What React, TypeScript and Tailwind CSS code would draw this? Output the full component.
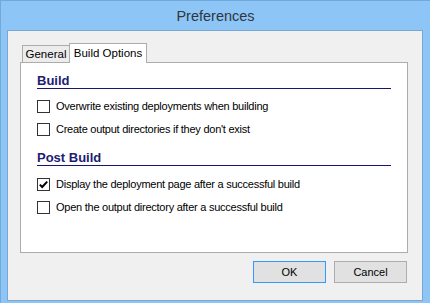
import React, { useState } from 'react';

const CheckRow = ({ label, checked }: { label: string; checked: boolean }) => (
  <label className="flex items-center h-[13px]">
    <span className="flex items-center justify-center w-[13px] h-[13px] border border-[#333333] bg-white shrink-0">
      {checked && (
        <svg width="11" height="11" viewBox="0 0 11 11">
          <path d="M1.8 5.6 L4.2 8 L9.2 2.6" fill="none" stroke="#000" strokeWidth="2" />
        </svg>
      )}
    </span>
    <span className="ml-[6px] text-[11px] leading-[13px] tracking-[-0.25px] text-black">{label}</span>
  </label>
);

const Heading = ({ children }: { children: React.ReactNode }) => (
  <div className="border-b border-[#16166e] text-[13px] leading-[14px] font-bold text-[#1c1c72]">
    {children}
  </div>
);

const App = () => {
  const [tab] = useState('build');

  return (
    <div
      className="w-[430px] h-[303px] bg-[#8dc6f6] border-l border-t border-[#72a9dc] overflow-hidden"
      style={{ fontFamily: '"Liberation Sans", Arial, sans-serif' }}
    >
      {/* title bar */}
      <div className="h-[29px] flex items-center justify-center pt-[3px] text-[14.5px] text-[#2f3640]">
        Preferences
      </div>

      {/* client area */}
      <div className="ml-[6px] w-[416px] h-[271px] border border-[#7aa6d2] bg-[#f0f0f0]">
        <div className="ml-[12px] w-[388px] pt-[12px]">
          {/* tabs */}
          <div className="flex items-end h-[19px] pl-[2px] text-[11.5px] text-black">
            <div className="h-[17px] w-[48px] border border-b-0 border-[#acacac] bg-[#ececec] flex items-center justify-center pt-[1px]">
              General
            </div>
            <div className="relative z-10 -mb-px h-[20px] w-[78px] -ml-px border border-b-0 border-[#acacac] bg-white flex items-center justify-center">
              {tab === 'build' && 'Build Options'}
            </div>
          </div>

          {/* panel */}
          <div className="h-[191px] border border-[#acacac] bg-white px-[16px] pt-[11px]">
            <Heading>Build</Heading>
            <div className="flex flex-col gap-[10px] mt-[11px]">
              <CheckRow label="Overwrite existing deployments when building" checked={false} />
              <CheckRow label="Create output directories if they don't exist" checked={false} />
            </div>
            <div className="mt-[15px]">
              <Heading>Post Build</Heading>
            </div>
            <div className="flex flex-col gap-[10px] mt-[12px]">
              <CheckRow label="Display the deployment page after a successful build" checked={true} />
              <CheckRow label="Open the output directory after a successful build" checked={false} />
            </div>
          </div>

          {/* buttons */}
          <div className="flex justify-end gap-[8px] mt-[8px] pr-px text-[11px]">
            <button className="w-[73px] h-[22px] border border-[#3399ff] bg-[#e1e1e1] text-black">OK</button>
            <button className="w-[73px] h-[22px] border border-[#adadad] bg-[#e1e1e1] text-black">Cancel</button>
          </div>
        </div>
      </div>
    </div>
  );
};

export default App;
